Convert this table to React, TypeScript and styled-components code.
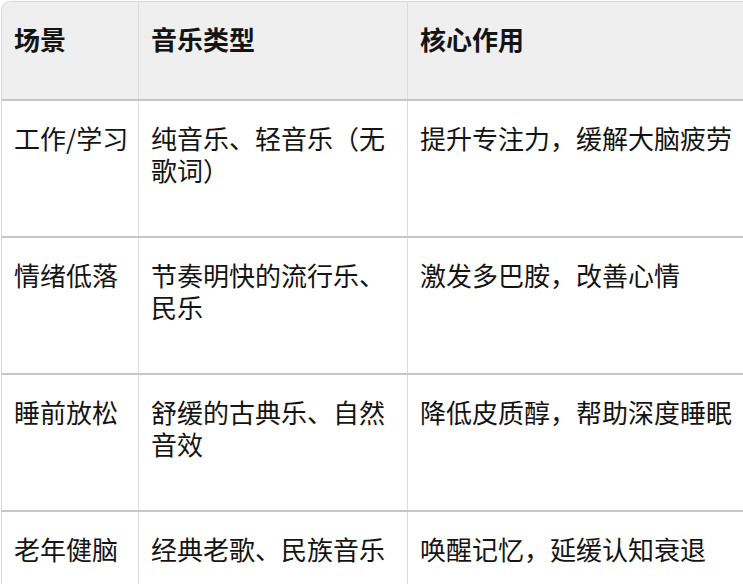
import React from 'react'
import styled, { createGlobalStyle } from 'styled-components'

const GlobalStyle = createGlobalStyle`
  html, body {
    margin: 0;
    padding: 0;
    background: #ffffff;
    overflow: hidden;
  }
  body {
    font-family: "Noto Sans CJK SC", "Noto Sans", sans-serif;
    color: #141414;
  }
`

const Page = styled.div`
  width: 743px;
  height: 584px;
  padding: 1px 0 0 1px;
  box-sizing: border-box;
  overflow: hidden;
`

const Table = styled.div`
  width: 800px;
  border-top: 1px solid #d9d9d9;
  border-left: 1px solid #d9d9d9;
  border-top-left-radius: 9px;
  overflow: hidden;
`

const Row = styled.div<{ $head?: boolean }>`
  display: grid;
  grid-template-columns: 137px 269px 1fr;
  height: ${(p) => (p.$head ? '99px' : '137px')};
  box-sizing: border-box;
  border-bottom: 2px solid #c6c6c6;
  background: ${(p) => (p.$head ? '#efefef' : '#ffffff')};
`

const Cell = styled.div<{ $head?: boolean }>`
  box-sizing: border-box;
  padding: 21px 6px 0 12px;
  border-right: 1px solid #dcdcdc;
  font-size: 26px;
  line-height: 32px;
  font-weight: ${(p) => (p.$head ? 700 : 400)};
  letter-spacing: 0;
  word-break: break-all;
`

const headers = ['场景', '音乐类型', '核心作用']

const rows = [
  ['工作/学习', '纯音乐、轻音乐（无歌词）', '提升专注力，缓解大脑疲劳'],
  ['情绪低落', '节奏明快的流行乐、民乐', '激发多巴胺，改善心情'],
  ['睡前放松', '舒缓的古典乐、自然音效', '降低皮质醇，帮助深度睡眠'],
  ['老年健脑', '经典老歌、民族音乐', '唤醒记忆，延缓认知衰退'],
]

export default function App() {
  return (
    <Page>
      <GlobalStyle />
      <Table>
        <Row $head>
          {headers.map((h) => (
            <Cell $head key={h}>
              {h}
            </Cell>
          ))}
        </Row>
        {rows.map((r) => (
          <Row key={r[0]}>
            {r.map((c) => (
              <Cell key={c}>{c}</Cell>
            ))}
          </Row>
        ))}
      </Table>
    </Page>
  )
}
